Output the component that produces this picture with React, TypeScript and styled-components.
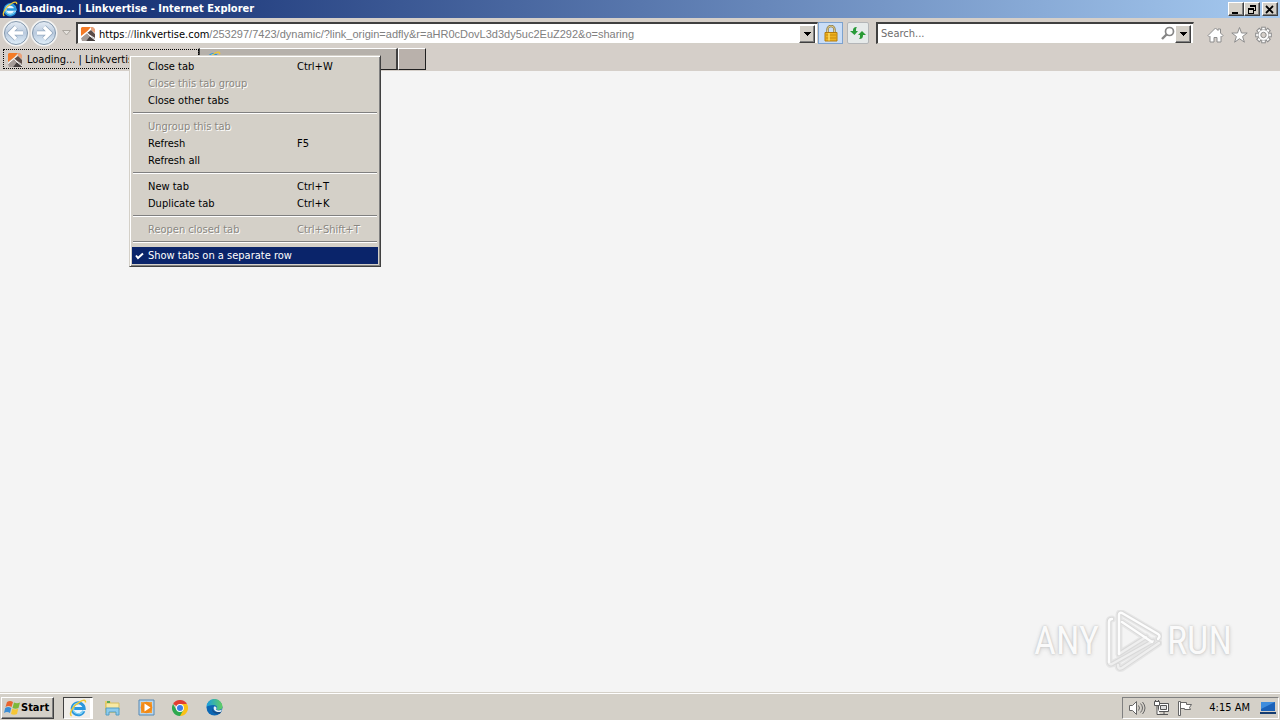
import React from "react";
import styled, { createGlobalStyle, css } from "styled-components";

const ui = '"DejaVu Sans Condensed", "DejaVu Sans", sans-serif';

const GlobalStyle = createGlobalStyle`
  *, *::before, *::after { box-sizing: border-box; }
  body { margin: 0; background: #f4f4f4; color: #000; font: 11px/16px ${ui}; }
  button, input { font: inherit; color: inherit; padding: 0; margin: 0; border: 0; border-radius: 0; background: none; }
  svg { display: block; flex: none; }
`;

const raised = css`
  border: 1px solid;
  border-color: #fff #404040 #404040 #fff;
  box-shadow: inset -1px -1px 0 #808080;
  background: #d4d0c8;
`;

const Desktop = styled.div`
  display: flex;
  flex-direction: column;
  min-height: 100vh;
`;

const TitleBar = styled.header`
  display: flex;
  align-items: center;
  height: 18px;
  padding: 0 2px;
  color: #fff;
  background: linear-gradient(90deg, #0a246a, #a6caf0);
`;

const Title = styled.h1`
  flex: 1;
  margin: 0 0 0 1px;
  font: bold 11px/18px ${ui};
  white-space: nowrap;
`;

const CaptionButton = styled.button<{ $apart?: boolean }>`
  ${raised}
  width: 16px;
  height: 14px;
  margin-left: ${(p) => (p.$apart ? 2 : 0)}px;
  display: grid;
  place-items: center;
`;

const Toolbar = styled.div`
  display: flex;
  align-items: center;
  height: 30px;
  padding: 0 8px 0 2px;
  background: #d5cfc9;
`;

const NavButtons = styled.div`
  display: flex;
  align-items: center;
  width: 74px;
`;

const NavButton = styled.button`
  width: 28px;
  height: 28px;
`;

const Recent = styled.button`
  width: 16px;
  height: 20px;
  display: grid;
  place-items: center;
`;

const Field = styled.div<{ $grow: number }>`
  flex: ${(p) => p.$grow} 1 0;
  min-width: 0;
  height: 22px;
  display: flex;
  align-items: center;
  padding: 0 2px;
  background: #fff;
  border: 1px solid;
  border-top: 2px solid #404040;
  border-left: 2px solid #404040;
  border-right-color: #d4d0c8;
  border-bottom-color: #d4d0c8;
`;

const AddressArea = styled.div`
  flex: 1;
  min-width: 0;
  position: relative;
  margin-left: 3px;
  height: 18px;
`;

const AddressInput = styled.input`
  width: 100%;
  height: 18px;
  outline: 0;
  color: transparent;
  caret-color: #000;
`;

const AddressText = styled.div`
  position: absolute;
  inset: 0;
  overflow: hidden;
  white-space: nowrap;
  font-family: "Liberation Sans", Arial, sans-serif;
  line-height: 18px;
  color: #808080;
  pointer-events: none;

  b { font-weight: normal; font-family: ${ui}; color: #000; }
`;

const SearchInput = styled.input`
  flex: 1;
  min-width: 0;
  height: 18px;
  padding-left: 1px;
  outline: 0;

  &::placeholder { color: #6d6d6d; opacity: 1; }
`;

const DropButton = styled.button`
  ${raised}
  width: 16px;
  height: 18px;
  display: grid;
  place-items: center;
`;

const LockButton = styled.button`
  width: 25px;
  height: 22px;
  border: 1px solid #7da2ce;
  background: #c9ddf7;
  display: grid;
  place-items: center;
`;

const RefreshButton = styled.button`
  width: 22px;
  height: 22px;
  margin: 0 7px 0 4px;
  border: 1px solid #b4b6b8;
  border-radius: 2px;
  background: #e6eaea;
  display: grid;
  place-items: center;
`;

const Commands = styled.div`
  display: flex;
  gap: 7px;
  margin-left: 13px;
  padding-top: 3px;
`;

const CommandButton = styled.button`
  width: 17px;
  height: 18px;
`;

const TabRow = styled.div`
  position: relative;
  display: flex;
  height: 23px;
  padding: 0 0 1px 2px;
  background: #d5cfc9;
`;

const Tab = styled.button<{ $active?: boolean }>`
  width: 198px;
  display: flex;
  align-items: center;
  gap: 4px;
  padding: 2px 5px;
  white-space: nowrap;
  border-right: 2px solid ${(p) => (p.$active ? "#d5cfc9" : "#404040")};
  background: ${(p) => (p.$active ? "#d5cfc9" : "#b6b1ab")};
  border-top: 1px solid ${(p) => (p.$active ? "#d5cfc9" : "#fff")};
  border-bottom: ${(p) => (p.$active ? "0" : "1px solid #202020")};
  ${(p) =>
    p.$active &&
    css`
      border-right-color: #404040;
      outline: 1px dotted #000;
      outline-offset: -2px;
    `}
`;

const NewTab = styled.button`
  width: 28px;
  background: #b9b1ab;
  border: 1px solid;
  border-color: #fff #202020 #202020 #fff;
`;

const Menu = styled.div`
  position: absolute;
  z-index: 2;
  top: 7px;
  left: 129px;
  width: 252px;
  padding: 2px;
  background: #d4d0c8;
  border: 1px solid;
  border-color: #d4d0c8 #404040 #404040 #d4d0c8;
  box-shadow: inset 1px 1px 0 #fff, inset -1px -1px 0 #808080;
`;

const MenuItem = styled.button<{ $selected?: boolean }>`
  width: 100%;
  height: 17px;
  display: grid;
  grid-template-columns: 16px 149px 1fr;
  align-items: center;
  text-align: left;
  white-space: nowrap;
  line-height: 17px;
  color: ${(p) => (p.$selected ? "#fff" : "#000")};
  background: ${(p) => (p.$selected ? "#0a246a" : "none")};

  &:disabled { color: #8a8781; text-shadow: 1px 1px 0 #fff; }
`;

const Separator = styled.hr`
  height: 2px;
  margin: 3px 1px 4px;
  border: 0;
  border-top: 1px solid #808080;
  border-bottom: 1px solid #fff;
`;

const Page = styled.main`
  flex: 1;
  display: flex;
  justify-content: flex-end;
  align-items: flex-end;
  padding: 0 48px 20px 0;
  background: #f4f4f4;
`;

const Watermark = styled.div`
  display: flex;
  align-items: center;
  gap: 5px;
  font: 38px/62px "Roboto Condensed", Roboto, sans-serif;
  color: #fafafa;
  text-shadow: 0 0 2px #bdbdbd, 0 1px 4px #cfcfcf;
`;

const Taskbar = styled.footer`
  display: flex;
  align-items: center;
  height: 28px;
  padding: 3px 1px 1px;
  background: #d4d0c8;
  border-top: 1px solid #d4d0c8;
  box-shadow: inset 0 1px 0 #fff;
`;

const StartButton = styled.button`
  ${raised}
  width: 53px;
  height: 22px;
  display: flex;
  align-items: center;
  gap: 1px;
  padding-left: 2px;
  font-weight: bold;
`;

const Launchers = styled.nav`
  flex: 1;
  display: flex;
  align-items: center;
  gap: 4px;
  margin-left: 9px;
`;

const Launcher = styled.button<{ $active?: boolean }>`
  width: 30px;
  height: 22px;
  display: grid;
  place-items: center;
  ${(p) =>
    p.$active &&
    css`
      border: 1px solid;
      border-color: #404040 #fff #fff #404040;
      background: #f0eeea;
      box-shadow: inset -2px 0 0 #fff;
    `}
`;

const Tray = styled.div`
  display: flex;
  align-items: center;
  gap: 7px;
  height: 22px;
  padding: 0 2px 0 5px;
  border: 1px solid;
  border-color: #808080 #fff #fff #808080;
`;

const Clock = styled.time`
  margin: 0 3px 0 9px;
  white-space: nowrap;
`;

function IeLogo({ size }: { size: number }) {
  return (
    <svg width={size} height={size} viewBox="0 0 18 18" fill="none">
      <circle cx="9.500" cy="9.500" r="6.500" fill="#e9f6fd" />
      <path d="M14.800 12A6 6 0 1 1 15.200 9.600H5.200" stroke="#2b97dc" strokeWidth="3" />
      <path d="M14.400 12A5.600 5.600 0 0 1 4 9q.5-4 5-5" stroke="#8fdcfa" strokeWidth="1.200" />
      <path d="M2.600 16.800C-1 15 4.500 6.200 10.800 2.800c3.400-1.900 6-2.200 5.700.7" stroke="#f0c832" strokeWidth="1.500" />
    </svg>
  );
}

function LinkvertiseLogo() {
  return (
    <svg width="16" height="16" viewBox="0 0 16 16">
      <path d="M2 1h9L7.500 5 1 10V2z" fill="#f47b26" />
      <path d="M11 1h2l2 2v4l-4-3z" fill="#e9a27a" />
      <path d="M7 7l4-3 4 4v4z" fill="#5a4c48" />
      <path d="M1 12l6-5 3 3-4 5H2z" fill="#a59c98" />
      <path d="M6 15l4-5 5 3v2z" fill="#453f3e" />
      <path d="M1 11.500L7 6.500l3 3.500 5 4M10 3.500L7 6.500" stroke="#fff" fill="none" />
    </svg>
  );
}

function NavArrow({ forward }: { forward?: boolean }) {
  const gradient = forward ? "nav-forward" : "nav-back";
  const arrow = forward ? "M7 14h13M14 8l6 6-6 6" : "M21 14H8M14 8l-6 6 6 6";
  return (
    <svg width="28" height="28" viewBox="0 0 28 28">
      <defs>
        <linearGradient id={gradient} x2="0" y2="1">
          <stop stopColor="#e6edf5" />
          <stop offset=".5" stopColor="#b9cade" />
          <stop offset="1" stopColor="#e1f0fb" />
        </linearGradient>
      </defs>
      <circle cx="14" cy="14" r="13.500" fill="#f3f3f2" />
      <circle cx="14" cy="14" r="11.500" fill={`url(#${gradient})`} stroke="#8599ae" />
      <path d={arrow} fill="none" stroke="#94a9c0" strokeWidth="5" />
      <path d={arrow} fill="none" stroke="#fff" strokeWidth="3.400" />
    </svg>
  );
}

const Caret = () => (
  <svg width="8" height="4" viewBox="0 0 8 4" shapeRendering="crispEdges">
    <path d="M0 0h8L4 4z" />
  </svg>
);

const LockIcon = () => (
  <svg width="14" height="17" viewBox="0 0 14 17">
    <path d="M3.500 8V4.500a3.500 3.500 0 0 1 7 0V8" fill="none" stroke="#8b7a49" strokeWidth="2.400" />
    <path d="M3.500 8V4.500a3.500 3.500 0 0 1 7 0V8" fill="none" stroke="#e2cf8c" />
    <path d="M1 7.500h12V16H1z" fill="#eeb222" stroke="#b57c0b" />
    <path d="M2 10h10M2 13h10" stroke="#c98c0c" />
    <path d="M5 8v7.500" stroke="#ffdf68" strokeWidth="1.500" />
  </svg>
);

const RefreshIcon = () => (
  <svg width="16" height="14" viewBox="0 0 16 14">
    <path d="M7 1C4 1 3 2 3 5H0l4.500 4L8 5H6c0-2 0-3 1-4z" fill="#299b3a" />
    <path d="M9 13c3 0 4-1 4-4h3l-4-4-4 4h2c0 2 0 3-1 4z" fill="#2a9a35" />
  </svg>
);

const Magnifier = () => (
  <svg width="14" height="15" viewBox="0 0 14 15" fill="none" stroke="#858585">
    <circle cx="8.500" cy="5.500" r="4" strokeWidth="1.700" />
    <path d="M5.500 8.500L1 13" strokeWidth="2.400" />
  </svg>
);

const HomeIcon = () => (
  <svg width="17" height="18" viewBox="0 0 17 18">
    <path
      d="M1 9.500L8.500 2 11 4.500V3h2.500v4L16 9.500 14.500 11 14 10.500V16H10v-4.500H7V16H3v-5.500L2.500 11z"
      fill="#fff"
      stroke="#8c8c8c"
    />
  </svg>
);

const StarIcon = () => (
  <svg width="17" height="18" viewBox="0 0 17 18">
    <path
      d="M8.500 1.500l2 5.500h5.700l-4.600 3.500 1.800 5.700-4.900-3.500-4.900 3.500 1.800-5.700L.8 7h5.700z"
      fill="#fff"
      stroke="#8c8c8c"
    />
  </svg>
);

const GearIcon = () => (
  <svg width="17" height="18" viewBox="0 0 17 18">
    <g transform="translate(8.5 9)">
      {[0, 45, 90, 135].map((a) => (
        <rect key={a} x="-1.800" y="-7.800" width="3.600" height="15.600" fill="#fff" stroke="#8c8c8c" transform={`rotate(${a})`} />
      ))}
      <circle r="5.300" fill="#fff" stroke="#999" strokeWidth=".7" />
      <circle r="4.600" fill="#fff" />
      <circle r="2.700" fill="#d5cfc9" stroke="#8c8c8c" />
    </g>
  </svg>
);

const Check = () => (
  <svg width="16" height="9" viewBox="0 0 16 9">
    <path d="M4 4.500l2 2.500 5-4.500" fill="none" stroke="#fff" strokeWidth="2" />
  </svg>
);

const WindowsFlag = () => (
  <svg width="16" height="16" viewBox="0 0 16 16">
    <path d="M3 2q3-2 6 0L7.500 7q-3-2-6 0z" fill="#e9642e" />
    <path d="M10 2.500q3 1.500 6 0L14.500 8q-3 1.500-6 0z" fill="#7db83b" />
    <path d="M1.200 8q3-2 6 0L6 13q-3-2-6 0z" fill="#3b8ed6" />
    <path d="M8.200 8.800q3 1.500 6 0L13 14q-3 1.500-6 0z" fill="#f6c635" />
  </svg>
);

const FolderIcon = () => (
  <svg width="17" height="17" viewBox="0 0 17 17">
    <path d="M1 2h5l1 2h7v10H1z" fill="#e9cd68" />
    <path d="M2 4h13v7H2z" fill="#f9e9a3" stroke="#d6bd63" />
    <path d="M3 3h3" stroke="#5ba956" strokeWidth="2" />
    <path d="M2 16V9h13v7h-3v-3H5v3z" fill="#8bcbed" stroke="#559dc3" />
  </svg>
);

const PlayerIcon = () => (
  <svg width="17" height="17" viewBox="0 0 17 17">
    <path d="M1 1h15v15H1z" fill="#b9d6ee" stroke="#5689b4" />
    <path d="M3 3h11v11H3z" fill="#f0a03c" />
    <circle cx="8.500" cy="8.500" r="5.800" fill="#f28a18" />
    <path d="M6.500 4.500l6 4-6 4z" fill="#fff" />
  </svg>
);

const ChromeIcon = () => (
  <svg width="16" height="16" viewBox="0 0 16 16">
    <path d="M8 8L1.070 4A8 8 0 0 1 14.930 4z" fill="#e23d31" />
    <path d="M8 8V4h6.930A8 8 0 0 1 8 16z" fill="#fbc116" />
    <path d="M8 8l3.460 2L8 16A8 8 0 0 1 1.070 4L4.500 10z" fill="#2da94f" />
    <circle cx="8" cy="8" r="3.900" fill="#fff" />
    <circle cx="8" cy="8" r="3" fill="#3d7ee8" />
  </svg>
);

const EdgeIcon = () => (
  <svg width="17" height="17" viewBox="0 0 17 17">
    <defs>
      <linearGradient id="edge">
        <stop stopColor="#1a9de1" />
        <stop offset="1" stopColor="#61ce61" />
      </linearGradient>
    </defs>
    <circle cx="8.500" cy="8.500" r="8" fill="#0c67b4" />
    <path d="M.5 8a8 8 0 0 1 16-.2c0 3-4 4-6 2.700 1.500-2 0-4.500-3-4.500C4 6 1 7 .5 8z" fill="url(#edge)" />
    <path d="M7 8c-2 3 2 6.500 8.500 4.500l-1.500 2C9 16 4 12 7 8z" fill="#164c88" />
    <path d="M8 7.500c3 0 3 2 2 3 1.500 1.500 4 1 6 0l-1 2.200C10 14 6.500 11 8 7.500z" fill="#e8f1f5" />
  </svg>
);

const SpeakerIcon = () => (
  <svg width="18" height="16" viewBox="0 0 18 16" fill="none" stroke="#666">
    <path d="M1.500 5.500h3l4-4v13l-4-4h-3z" fill="#fff" />
    <path d="M10.500 5.500q2 2.500 0 5M12.500 3.500q4 4.500 0 9M14.500 2q5 6 0 12" />
  </svg>
);

const NetworkIcon = () => (
  <svg width="17" height="16" viewBox="0 0 17 16" fill="#fff" stroke="#555">
    <path d="M5.500 3.500h10v8h-10zM7 14.500h8M11 12v2" />
    <path d="M7.500 5.500h6v4h-6z" fill="#ddd" />
    <path d="M1.500 1.500h5v4h-5zM2.500 0v2M5.500 0v2M4 6v8.500h3" />
  </svg>
);

const FlagIcon = () => (
  <svg width="16" height="16" viewBox="0 0 16 16" fill="#fff" stroke="#666">
    <path d="M3.500 2.500h6v2h5l-2 3 1 2h-6v-1h-4z" />
    <path d="M1.500 1.500h2v14h-2z" />
  </svg>
);

const ScreenIcon = () => (
  <svg width="16" height="14" viewBox="0 0 16 14">
    <path d="M1 1h14v9H1z" fill="#1b62b9" />
    <path d="M1 1h14L1 8z" fill="#3f8ddd" />
    <path d="M0 11h16v2H0z" fill="#153c70" />
  </svg>
);

const PlayMark = () => {
  const upper = "M5 52V12q0-3 3-3M15 44V5q0-3 3-2l36 21q3 2 0 5M18 12l30 20";
  const lower = "M55 33L18 58q-4 2-4-3M49 31L8 54q-3 1-3-2M15 44l27-17";
  return (
    <svg width="58" height="62" viewBox="0 0 58 62" fill="none" strokeLinejoin="round" strokeLinecap="round">
      <path d={upper + lower} stroke="#e6e6e6" strokeWidth="7" />
      <path d={upper + lower} stroke="#d9d9d9" strokeWidth="4.500" />
      <path d={lower} stroke="#efefef" strokeWidth="2.500" />
      <path d={upper} stroke="#fdfdfd" strokeWidth="2.500" />
    </svg>
  );
};

type Entry = { label: string; keys?: string; disabled?: boolean; checked?: boolean };

const groups: Entry[][] = [
  [
    { label: "Close tab", keys: "Ctrl+W" },
    { label: "Close this tab group", disabled: true },
    { label: "Close other tabs" },
  ],
  [
    { label: "Ungroup this tab", disabled: true },
    { label: "Refresh", keys: "F5" },
    { label: "Refresh all" },
  ],
  [
    { label: "New tab", keys: "Ctrl+T" },
    { label: "Duplicate tab", keys: "Ctrl+K" },
  ],
  [{ label: "Reopen closed tab", keys: "Ctrl+Shift+T", disabled: true }],
  [{ label: "Show tabs on a separate row", checked: true }],
];

function TabMenu() {
  return (
    <Menu role="menu">
      {groups.map((group, i) => (
        <React.Fragment key={i}>
          {i > 0 && <Separator />}
          {group.map((item) => (
            <MenuItem
              key={item.label}
              role={item.checked ? "menuitemcheckbox" : "menuitem"}
              aria-checked={item.checked}
              disabled={item.disabled}
              $selected={item.checked}
            >
              <span>{item.checked && <Check />}</span>
              <span>{item.label}</span>
              <span>{item.keys}</span>
            </MenuItem>
          ))}
        </React.Fragment>
      ))}
    </Menu>
  );
}

export default function App() {
  return (
    <Desktop>
      <GlobalStyle />
      <TitleBar>
        <IeLogo size={16} />
        <Title>Loading... | Linkvertise - Internet Explorer</Title>
        <CaptionButton aria-label="Minimize">
          <svg width="10" height="9" viewBox="0 0 10 9"><path d="M1 7h6v2H1z" /></svg>
        </CaptionButton>
        <CaptionButton aria-label="Restore">
          <svg width="10" height="9" viewBox="0 0 10 9" fill="none" stroke="#000" shapeRendering="crispEdges">
            <path d="M3.500 2V.5h5v5H7M3 1h6M1.500 3.500h5v5h-5zM1 4h6" />
          </svg>
        </CaptionButton>
        <CaptionButton aria-label="Close" $apart>
          <svg width="10" height="9" viewBox="0 0 10 9"><path d="M1 1l7 7M8 1L1 8" stroke="#000" strokeWidth="1.800" /></svg>
        </CaptionButton>
      </TitleBar>

      <Toolbar>
        <NavButtons>
          <NavButton aria-label="Back"><NavArrow /></NavButton>
          <NavButton aria-label="Forward"><NavArrow forward /></NavButton>
          <Recent aria-label="Recent pages">
            <svg width="9" height="6" viewBox="0 0 9 6"><path d="M.5.5h8l-4 4.500z" fill="#e5e2dd" stroke="#aaa69f" /></svg>
          </Recent>
        </NavButtons>
        <Field $grow={26}>
          <LinkvertiseLogo />
          <AddressArea>
            <AddressInput aria-label="Address" />
            <AddressText>
              <b>https</b>://<b>linkvertise.com</b>
              /253297/7423/dynamic/?link_origin=adfly&amp;r=aHR0cDovL3d3dy5uc2EuZ292&amp;o=sharing
            </AddressText>
          </AddressArea>
          <DropButton aria-label="Show address list"><Caret /></DropButton>
        </Field>
        <LockButton aria-label="Security report"><LockIcon /></LockButton>
        <RefreshButton aria-label="Refresh"><RefreshIcon /></RefreshButton>
        <Field $grow={11}>
          <SearchInput aria-label="Search" placeholder="Search..." />
          <Magnifier />
          <DropButton aria-label="Search options"><Caret /></DropButton>
        </Field>
        <Commands>
          <CommandButton aria-label="Home"><HomeIcon /></CommandButton>
          <CommandButton aria-label="Favorites"><StarIcon /></CommandButton>
          <CommandButton aria-label="Tools"><GearIcon /></CommandButton>
        </Commands>
      </Toolbar>

      <TabRow>
        <Tab $active>
          <LinkvertiseLogo />
          <span>Loading... | Linkvertise</span>
        </Tab>
        <Tab aria-label="Second tab"><IeLogo size={16} /></Tab>
        <NewTab aria-label="New tab" />
        <TabMenu />
      </TabRow>

      <Page>
        <Watermark>
          <span>ANY</span>
          <PlayMark />
          <span>RUN</span>
        </Watermark>
      </Page>

      <Taskbar>
        <StartButton><WindowsFlag />Start</StartButton>
        <Launchers>
          <Launcher $active aria-label="Internet Explorer"><IeLogo size={18} /></Launcher>
          <Launcher aria-label="Explorer"><FolderIcon /></Launcher>
          <Launcher aria-label="Media Player"><PlayerIcon /></Launcher>
          <Launcher aria-label="Chrome"><ChromeIcon /></Launcher>
          <Launcher aria-label="Edge"><EdgeIcon /></Launcher>
        </Launchers>
        <Tray>
          <SpeakerIcon />
          <NetworkIcon />
          <FlagIcon />
          <Clock>4:15 AM</Clock>
          <ScreenIcon />
        </Tray>
      </Taskbar>
    </Desktop>
  );
}
